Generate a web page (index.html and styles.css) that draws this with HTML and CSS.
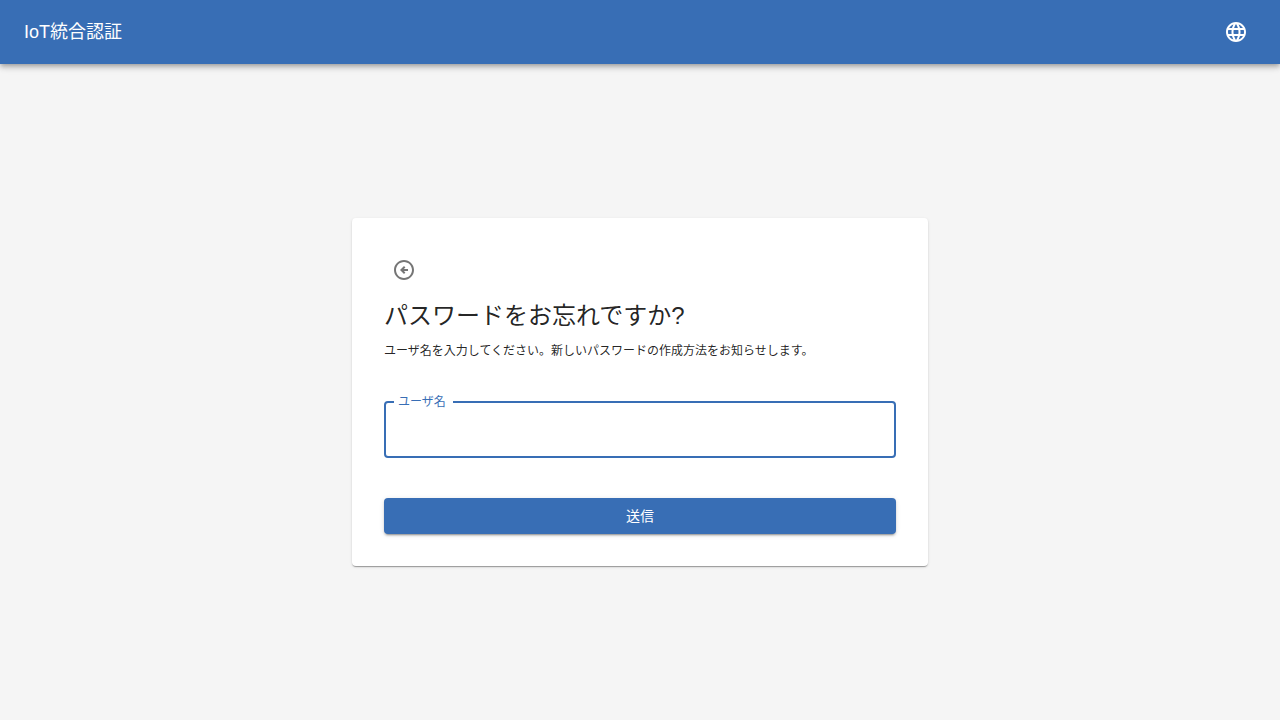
FILE: index.html
```html
<!DOCTYPE html>
<html lang="ja">
<head>
    <meta charset="UTF-8">
    <meta name="viewport" content="width=device-width, initial-scale=1.0">
    <title>IoT統合認証</title>
    <link rel="stylesheet" href="styles.css">
</head>
<body>
    <header class="app-bar">
        <div class="app-title">IoT統合認証</div>
        <button type="button" class="icon-button language-button" aria-label="言語">
            <svg class="icon" viewBox="0 0 24 24" aria-hidden="true">
                <path d="M11.99 2C6.47 2 2 6.48 2 12s4.47 10 9.99 10C17.52 22 22 17.52 22 12S17.52 2 11.99 2zm6.93 6h-2.95c-.32-1.25-.78-2.45-1.38-3.56 1.84.63 3.37 1.91 4.33 3.56zM12 4.04c.83 1.2 1.48 2.53 1.91 3.96h-3.82c.43-1.43 1.08-2.76 1.91-3.96zM4.26 14C4.1 13.36 4 12.69 4 12s.1-1.36.26-2h3.38c-.08.66-.14 1.32-.14 2s.06 1.34.14 2H4.26zm.82 2h2.95c.32 1.25.78 2.45 1.38 3.56-1.84-.63-3.37-1.9-4.33-3.56zm2.95-8H5.08c.96-1.66 2.49-2.93 4.33-3.56C8.81 5.55 8.35 6.75 8.03 8zM12 19.96c-.83-1.2-1.48-2.53-1.91-3.96h3.82c-.43 1.43-1.08 2.76-1.91 3.96zM14.34 14H9.66c-.09-.66-.16-1.32-.16-2s.07-1.35.16-2h4.68c.09.65.16 1.32.16 2s-.07 1.34-.16 2zm.25 5.56c.6-1.11 1.06-2.31 1.38-3.56h2.95c-.96 1.65-2.49 2.93-4.33 3.56zM16.36 14c.08-.66.14-1.32.14-2s-.06-1.34-.14-2h3.38c.16.64.26 1.31.26 2s-.1 1.36-.26 2h-3.38z"/>
            </svg>
        </button>
    </header>

    <main class="content">
        <form class="card">
            <button type="button" class="icon-button back-button" aria-label="戻る">
                <svg class="icon" viewBox="0 0 24 24" aria-hidden="true">
                    <path d="M2 12c0 5.52 4.48 10 10 10s10-4.48 10-10S17.52 2 12 2 2 6.48 2 12zm18 0c0 4.42-3.58 8-8 8s-8-3.58-8-8 3.58-8 8-8 8 3.58 8 8zM8 12l4-4 1.41 1.41L11.83 11H16v2h-4.17l1.59 1.59L12 16l-4-4z"/>
                </svg>
            </button>
            <h1 class="card-title">パスワードをお忘れですか?</h1>
            <p class="card-text">ユーザ名を入力してください。新しいパスワードの作成方法をお知らせします。</p>
            <div class="field">
                <label class="field-label" for="username">ユーザ名</label>
                <input class="field-input" type="text" id="username" name="username">
            </div>
            <button type="submit" class="submit-button">送信</button>
        </form>
    </main>
</body>
</html>
```

FILE: styles.css
```css
* {
    box-sizing: border-box;
}
body {
    display: flex;
    flex-direction: column;
    min-height: 100vh;
    margin: 0;
    background: #f5f5f5;
    color: rgba(0, 0, 0, 0.87);
    font-family: "Liberation Sans", "Noto Sans CJK JP", sans-serif;
}
button,
input {
    font-family: inherit;
}

/* header */
.app-bar {
    display: flex;
    align-items: center;
    justify-content: space-between;
    height: 64px;
    padding: 0 24px;
    background: #386eb5;
    color: #fff;
    box-shadow: 0 2px 4px -1px rgba(0, 0, 0, 0.2),
        0 4px 5px 0 rgba(0, 0, 0, 0.14),
        0 1px 10px 0 rgba(0, 0, 0, 0.12);
}
.app-title {
    font-size: 18px;
    line-height: 28px;
}
.icon-button {
    display: flex;
    align-items: center;
    justify-content: center;
    width: 40px;
    height: 40px;
    padding: 0;
    border: none;
    border-radius: 50%;
    background: transparent;
    cursor: pointer;
}
.icon {
    width: 24px;
    height: 24px;
    fill: currentColor;
}
.language-button {
    color: #fff;
}

/* form card */
.content {
    flex: 1;
    display: flex;
    align-items: center;
    justify-content: center;
    padding: 24px;
}
.card {
    width: 100%;
    max-width: 576px;
    padding: 32px;
    border-radius: 4px;
    background: #fff;
    box-shadow: 0 2px 1px -1px rgba(0, 0, 0, 0.2),
        0 1px 1px 0 rgba(0, 0, 0, 0.14),
        0 1px 3px 0 rgba(0, 0, 0, 0.12);
}
.back-button {
    color: rgba(0, 0, 0, 0.54);
}
.card-title {
    margin: 8px 0;
    font-size: 24px;
    font-weight: 400;
    line-height: 36px;
}
.card-text {
    margin: 0 0 41px;
    font-size: 12px;
    line-height: 18px;
}
.field {
    position: relative;
    margin-bottom: 40px;
}
.field-label {
    position: absolute;
    top: -7px;
    left: 10px;
    padding: 0 7px 0 4px;
    background: #fff;
    color: #386eb5;
    font-size: 12px;
    line-height: 16px;
}
.field-input {
    display: block;
    width: 100%;
    height: 57px;
    padding: 0 14px;
    border: 2px solid #386eb5;
    border-radius: 4px;
    outline: none;
    background: #fff;
    font-size: 16px;
}
.submit-button {
    display: block;
    width: 100%;
    padding: 6px 16px;
    border: none;
    border-radius: 4px;
    background: #386eb5;
    color: #fff;
    font-size: 14px;
    line-height: 24px;
    cursor: pointer;
    box-shadow: 0 3px 1px -2px rgba(0, 0, 0, 0.2),
        0 2px 2px 0 rgba(0, 0, 0, 0.14),
        0 1px 5px 0 rgba(0, 0, 0, 0.12);
}
```
